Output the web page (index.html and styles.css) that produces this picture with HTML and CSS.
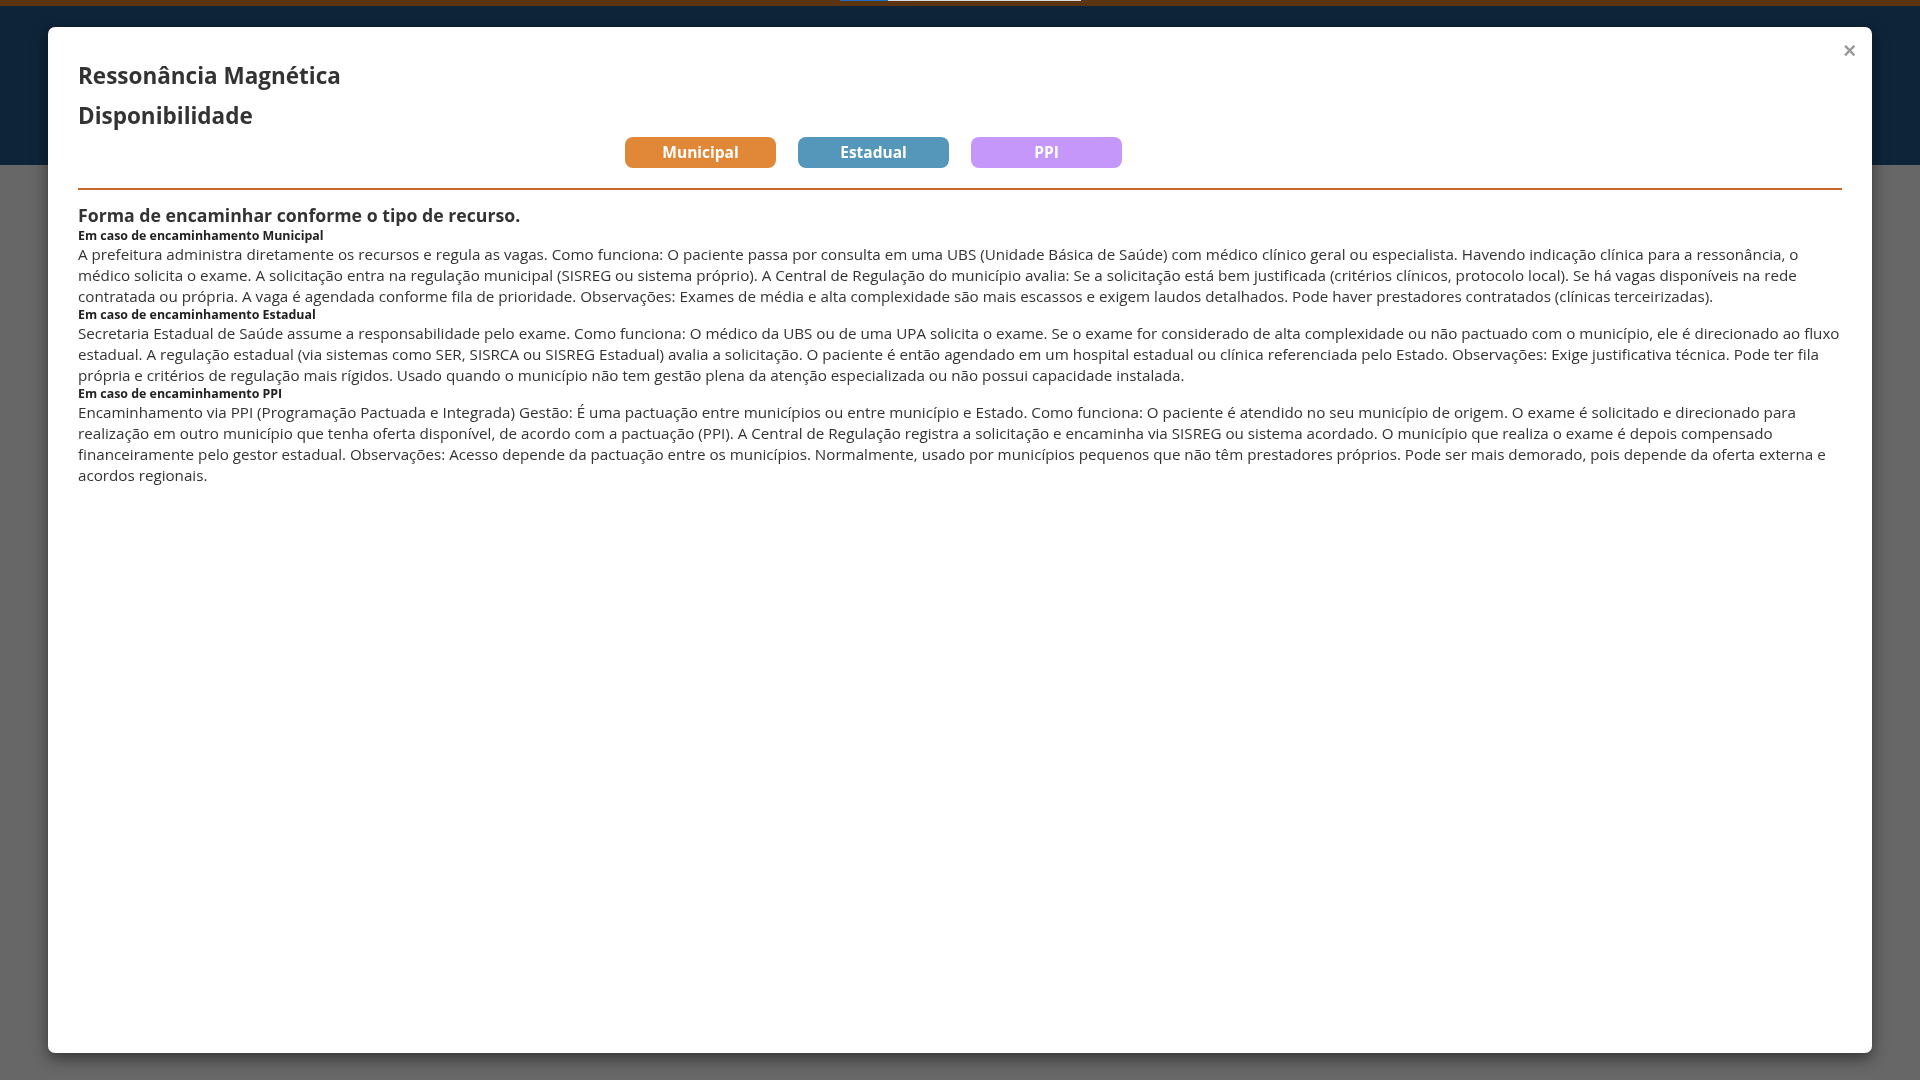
FILE: index.html
```html
<!DOCTYPE html>
<html lang="pt-BR">
<head>
<meta charset="utf-8">
<title>Ressonância Magnética - Disponibilidade</title>
<link rel="stylesheet" href="styles.css">
</head>
<body>
<div class="page">
  <div class="topbar"><span class="tb-blue"></span><span class="tb-light"></span></div>
  <div class="navband"></div>
  <div class="rest"></div>
</div>
<div class="overlay">
  <div class="modal">
    <button class="close" type="button" aria-label="Fechar">×</button>
    <h4 class="title">Ressonância Magnética</h4>
    <h4 class="title">Disponibilidade</h4>
    <div class="tabs">
      <button class="tab tab-municipal" type="button">Municipal</button>
      <button class="tab tab-estadual" type="button">Estadual</button>
      <button class="tab tab-ppi" type="button">PPI</button>
      <button class="tab tab-hidden" type="button">Outro</button>
    </div>
    <hr class="divider">
    <h5 class="section-title">Forma de encaminhar conforme o tipo de recurso.</h5>
    <div class="label">Em caso de encaminhamento Municipal</div>
    <p class="text">A prefeitura administra diretamente os recursos e regula as vagas. Como funciona: O paciente passa por consulta em uma UBS (Unidade Básica de Saúde) com médico clínico geral ou especialista. Havendo indicação clínica para a ressonância, o médico solicita o exame. A solicitação entra na regulação municipal (SISREG ou sistema próprio). A Central de Regulação do município avalia: Se a solicitação está bem justificada (critérios clínicos, protocolo local). Se há vagas disponíveis na rede contratada ou própria. A vaga é agendada conforme fila de prioridade. Observações: Exames de média e alta complexidade são mais escassos e exigem laudos detalhados. Pode haver prestadores contratados (clínicas terceirizadas).</p>
    <div class="label">Em caso de encaminhamento Estadual</div>
    <p class="text">Secretaria Estadual de Saúde assume a responsabilidade pelo exame. Como funciona: O médico da UBS ou de uma UPA solicita o exame. Se o exame for considerado de alta complexidade ou não pactuado com o município, ele é direcionado ao fluxo estadual. A regulação estadual (via sistemas como SER, SISRCA ou SISREG Estadual) avalia a solicitação. O paciente é então agendado em um hospital estadual ou clínica referenciada pelo Estado. Observações: Exige justificativa técnica. Pode ter fila própria e critérios de regulação mais rígidos. Usado quando o município não tem gestão plena da atenção especializada ou não possui capacidade instalada.</p>
    <div class="label">Em caso de encaminhamento PPI</div>
    <p class="text">Encaminhamento via PPI (Programação Pactuada e Integrada) Gestão: É uma pactuação entre municípios ou entre município e Estado. Como funciona: O paciente é atendido no seu município de origem. O exame é solicitado e direcionado para realização em outro município que tenha oferta disponível, de acordo com a pactuação (PPI). A Central de Regulação registra a solicitação e encaminha via SISREG ou sistema acordado. O município que realiza o exame é depois compensado financeiramente pelo gestor estadual. Observações: Acesso depende da pactuação entre os municípios. Normalmente, usado por municípios pequenos que não têm prestadores próprios. Pode ser mais demorado, pois depende da oferta externa e acordos regionais.</p>
  </div>
</div>
</body>
</html>
```

FILE: styles.css
```css
* { box-sizing: border-box; }
html, body { margin: 0; padding: 0; }
body {
  width: 1920px;
  height: 1080px;
  overflow: hidden;
  font-family: "Open Sans", "Noto Sans", "Liberation Sans", sans-serif;
  color: #333;
  background: #676767;
}
.page { display: flex; flex-direction: column; height: 1080px; }
.topbar {
  height: 6px;
  background: #5b3411;
  display: flex;
  align-items: flex-start;
  padding-left: 840px;
}
.tb-blue { width: 48px; height: 1px; background: #1e6fc0; }
.tb-light { width: 193px; height: 1px; background: #d9d9d9; }
.navband { height: 159px; background: #0e2439; }
.rest { flex: 1; background: #676767; }

.overlay {
  position: fixed;
  inset: 0;
  padding: 27px 48px;
  display: flex;
}
.modal {
  position: relative;
  flex: 1;
  background: #fff;
  border-radius: 7px;
  box-shadow: 0 5px 15px rgba(0, 0, 0, 0.5);
  padding: 28.5px 30px 0 30px;
}
.close {
  position: absolute;
  top: 13px;
  right: 16px;
  border: 0;
  background: transparent;
  padding: 0;
  font-family: "Liberation Sans", Arial, sans-serif;
  font-size: 22px;
  font-weight: 700;
  line-height: 1;
  color: #9a9a9a;
  cursor: pointer;
}
.title {
  margin: 0;
  font-size: 22.5px;
  font-weight: 700;
  line-height: 40px;
  color: #333;
}
.tabs {
  display: flex;
  justify-content: center;
  gap: 22px;
  margin-top: 1px;
}
.tab {
  width: 151px;
  height: 31px;
  border: 0;
  border-radius: 8px;
  font-family: inherit;
  font-size: 15.5px;
  font-weight: 700;
  color: #fff;
  padding: 0;
}
.tab-municipal { background: #e08838; }
.tab-estadual { background: #5597bb; }
.tab-ppi { background: #c597fb; }
.tab-hidden { visibility: hidden; }
.divider {
  margin: 20px 0 0 0;
  border: 0;
  height: 2px;
  background: #c8682a;
}
.section-title {
  margin: 12.5px 0 0 0;
  font-size: 17.7px;
  font-weight: 700;
  line-height: 26px;
  color: #333;
}
.label {
  font-size: 12.4px;
  font-weight: 700;
  line-height: 16px;
  color: #222;
}
.text {
  margin: 0;
  font-size: 15.2px;
  line-height: 21px;
  color: #333;
}
```
